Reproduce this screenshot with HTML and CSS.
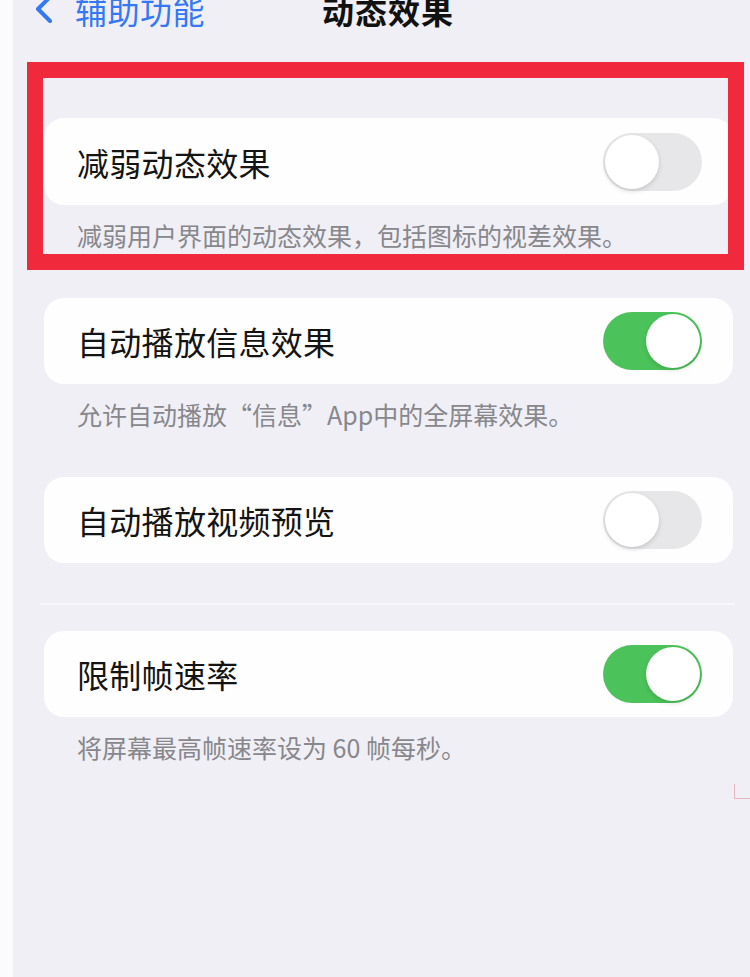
FILE: index.html
```html
<!DOCTYPE html>
<html lang="zh-CN">
<head>
  <meta charset="UTF-8">
  <meta name="viewport" content="width=device-width, initial-scale=1.0">
  <title>动态效果</title>
  <link rel="stylesheet" href="styles.css">
</head>
<body>
  <div class="frame">
    <div class="edge"></div>

    <!-- Settings screen -->
    <div class="screen">
      <nav class="nav">
        <a class="back">
          <svg class="chevron" width="22" height="30" viewBox="0 0 22 30">
            <polyline points="17,2 5,14 17,26"></polyline>
          </svg>
          <span>辅助功能</span>
        </a>
        <h1 class="title">动态效果</h1>
      </nav>

      <div class="card first">
        <span class="label">减弱动态效果</span>
        <div class="switch"><div class="knob"></div></div>
      </div>
      <p class="note">减弱用户界面的动态效果，包括图标的视差效果。</p>

      <div class="card">
        <span class="label">自动播放信息效果</span>
        <div class="switch on"><div class="knob"></div></div>
      </div>
      <p class="note">允许自动播放“信息”App中的全屏幕效果。</p>

      <div class="card">
        <span class="label">自动播放视频预览</span>
        <div class="switch"><div class="knob"></div></div>
      </div>

      <div class="divider"></div>

      <div class="card last">
        <span class="label">限制帧速率</span>
        <div class="switch on"><div class="knob"></div></div>
      </div>
      <p class="note">将屏幕最高帧速率设为 60 帧每秒。</p>
    </div>

    <!-- Annotation marks -->
    <div class="highlight"></div>
    <div class="corner-mark"></div>
  </div>
</body>
</html>
```

FILE: styles.css
```css
/* General Styles */
body {
  margin: 0;
  padding: 0;
  background: #fbfbfd;
  font-family: 'Noto Sans CJK SC', 'Noto Sans', sans-serif;
  overflow: hidden;
}

.frame {
  position: relative;
  display: flex;
  width: 750px;
  height: 977px;
  overflow: hidden;
}

.edge {
  width: 13px;
  flex-shrink: 0;
  background: #fbfbfd;
}

.screen {
  flex: 1;
  background: #f0eff5;
  padding-top: 1px;
}

/* Navigation Bar */
.nav {
  display: flex;
  align-items: center;
  height: 40px;
  margin-top: -11px;
  padding-left: 20px;
}

.back {
  display: flex;
  align-items: center;
  color: #3478f6;
  font-size: 32px;
  letter-spacing: 0.5px;
  width: 289px;
}

.chevron {
  margin-right: 20px;
}

.chevron polyline {
  fill: none;
  stroke: #3478f6;
  stroke-width: 4;
  stroke-linecap: round;
  stroke-linejoin: round;
}

.title {
  margin: 0;
  font-size: 32px;
  font-weight: 600;
  color: #111;
  letter-spacing: 1px;
}

/* Cards */
.card {
  display: flex;
  align-items: center;
  justify-content: space-between;
  height: 86px;
  margin: 48px 17px 0 31px;
  padding: 0 31px 0 33px;
  background: #fefefe;
  border-radius: 20px;
}

.card.first {
  margin-top: 88px;
  height: 87px;
}

.card.last {
  margin-top: 26px;
}

.label {
  font-size: 32px;
  color: #141414;
  letter-spacing: 0.3px;
}

.note {
  margin: 15px 0 0 64px;
  font-size: 25px;
  line-height: 30px;
  color: #87878c;
}

.divider {
  height: 2px;
  margin: 40px 15px 0 27px;
  background: #f8f8fb;
}

/* Switch */
.switch {
  width: 99px;
  height: 58px;
  padding: 2px;
  box-sizing: border-box;
  border-radius: 29px;
  background: #e7e7ea;
  display: flex;
}

.switch.on {
  background: #4cc35a;
  justify-content: flex-end;
}

.knob {
  width: 54px;
  height: 54px;
  border-radius: 50%;
  background: #fff;
  box-shadow: 0 2px 5px rgba(0, 0, 0, 0.15);
}

/* Annotation */
.highlight {
  position: absolute;
  left: 27px;
  top: 62px;
  width: 685px;
  height: 176px;
  border: 16px solid #f02a3c;
}

.corner-mark {
  position: absolute;
  left: 734px;
  top: 784px;
  width: 20px;
  height: 14px;
  border-left: 1px solid #e8b5bf;
  border-bottom: 1px solid #e8b5bf;
}
```
